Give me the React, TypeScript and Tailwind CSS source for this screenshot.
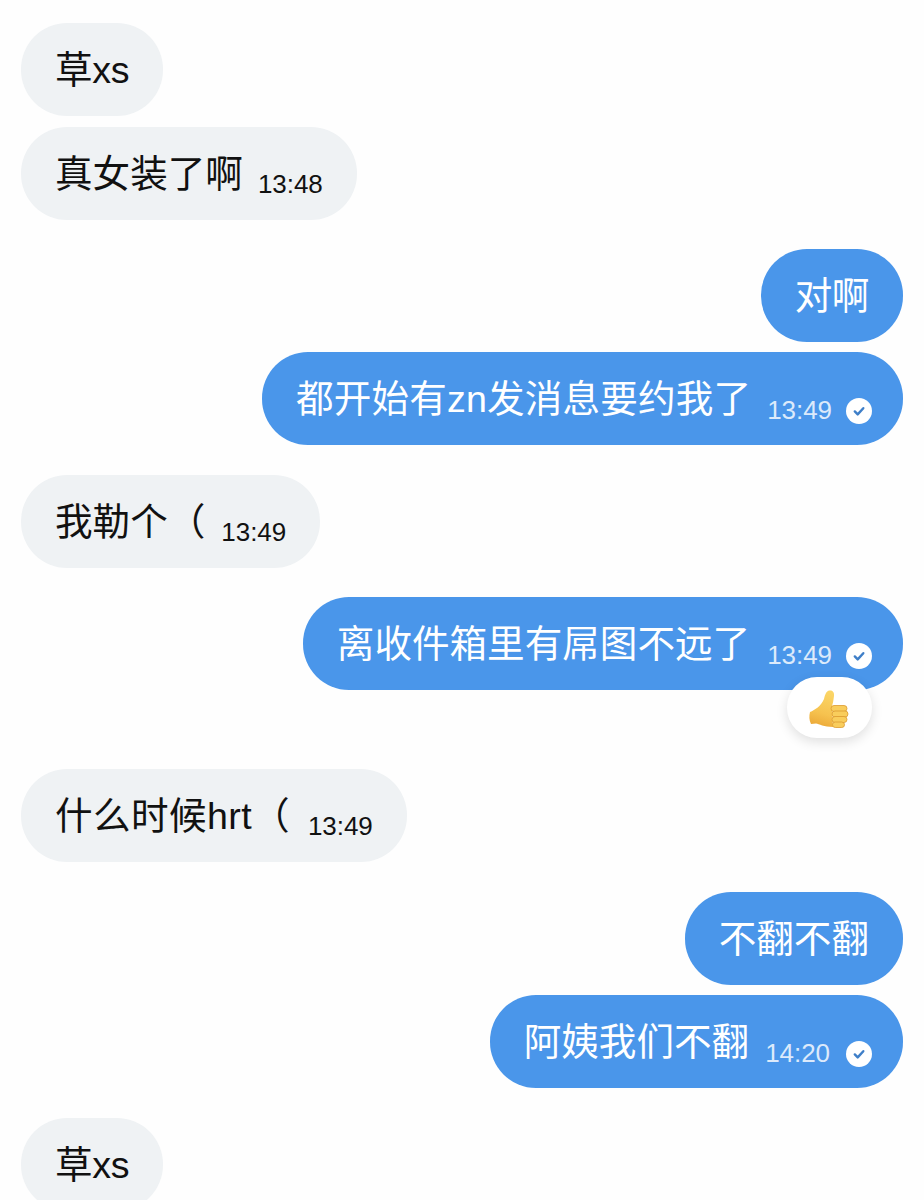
import React from 'react';

type Message = {
  id: number;
  text: string;
  mine?: boolean;
  time?: string;
  read?: boolean;
  reaction?: boolean;
  gapClass: string;
  textClass?: string;
  timeClass?: string;
};

const messages: Message[] = [
  { id: 1, text: '草xs', gapClass: 'mt-[23px]', textClass: 'tracking-[-0.3px]' },
  { id: 2, text: '真女装了啊', time: '13:48', gapClass: 'mt-[11px]', timeClass: 'ml-[15px]' },
  { id: 3, text: '对啊', mine: true, gapClass: 'mt-[29px]', textClass: 'tracking-[-0.4px]' },
  { id: 4, text: '都开始有zn发消息要约我了', mine: true, time: '13:49', read: true, gapClass: 'mt-[10px]', textClass: 'tracking-[0.16px]', timeClass: 'ml-[16px]' },
  { id: 5, text: '我勒个（', time: '13:49', gapClass: 'mt-[30px]', timeClass: 'ml-[16px]' },
  { id: 6, text: '离收件箱里有屌图不远了', mine: true, time: '13:49', read: true, reaction: true, gapClass: 'mt-[29px]', timeClass: 'ml-[17px]' },
  { id: 7, text: '什么时候hrt（', time: '13:49', gapClass: 'mt-[79px]', textClass: 'tracking-[0.4px]', timeClass: 'ml-[18px]' },
  { id: 8, text: '不翻不翻', mine: true, gapClass: 'mt-[30px]' },
  { id: 9, text: '阿姨我们不翻', mine: true, time: '14:20', read: true, gapClass: 'mt-[10px]', timeClass: 'ml-[16px] mr-[2px]' },
  { id: 10, text: '草xs', gapClass: 'mt-[30px]', textClass: 'tracking-[-0.3px]' },
];

const ReadTick = () => (
  <svg width="26" height="26" viewBox="0 0 26 26" className="ml-[14px] mt-[24px] shrink-0">
    <circle cx="13" cy="13" r="13" fill="#ffffff" />
    <path d="M8.800 13.400l2.900 3 5.600-6.200" fill="none" stroke="#3f7fc8" strokeWidth="2.400" strokeLinecap="round" strokeLinejoin="round" />
  </svg>
);

const ThumbsUp = () => (
  <svg width="40" height="38" viewBox="0 0 40 38" className="-ml-[2px] mt-[3px]">
    <defs>
      <linearGradient id="hand" x1="0.500" y1="0" x2="0.300" y2="1">
        <stop offset="0" stopColor="#fbd566" />
        <stop offset="0.600" stopColor="#f6c24f" />
        <stop offset="1" stopColor="#eba736" />
      </linearGradient>
    </defs>
    <path
      d="M1 22C6 20 12 16 15 9C16 5 17 1 20.500 .5C24 0 25.500 3 25 6C24.500 10 24 13 23 16L24 37C15 37 10 34 7 33.500L2 34C0 30 0 26 1 22z"
      fill="url(#hand)"
    />
    <g fill="#f9cd5c" stroke="#dc9a30" strokeWidth="0.800">
      <rect x="22" y="15.500" width="16" height="6" rx="3" />
      <rect x="23" y="21" width="16" height="6" rx="3" />
      <rect x="23" y="26.500" width="15" height="6" rx="3" />
      <rect x="23.500" y="32" width="12" height="5.500" rx="2.750" />
    </g>
  </svg>
);

const Bubble = ({ message }: { message: Message }) => {
  const { text, mine, time, read, reaction, gapClass, textClass, timeClass } = message;
  return (
    <div className={`flex ${mine ? 'justify-end' : 'justify-start'} ${gapClass}`}>
      <div
        className={`relative flex h-[93px] shrink-0 items-center rounded-[46px] pl-[34px] ${
          mine ? 'bg-[#4a96ea] text-white' : 'bg-[#eff2f4] text-[#111111]'
        } ${read ? 'pr-[31px]' : 'pr-[34px]'}`}
      >
        <span className={`mt-[3px] whitespace-nowrap text-[37.6px] leading-none ${textClass ?? ''}`}>{text}</span>
        {time && (
          <span
            className={`text-[26px] leading-none tracking-[-0.05px] ${mine ? 'mt-[22px] text-[#dceafb]' : 'mt-[20px]'} ${timeClass ?? ''}`}
          >
            {time}
          </span>
        )}
        {read && <ReadTick />}
        {reaction && (
          <div className="absolute right-[31px] top-[80px] flex h-[61px] w-[85px] items-center justify-center rounded-[30px] bg-white shadow-[0_4px_12px_rgba(0,0,0,0.12)]">
            <ThumbsUp />
          </div>
        )}
      </div>
    </div>
  );
};

export default function App() {
  return (
    <div className="h-[1200px] w-[924px] overflow-hidden bg-[#fefefe] px-[21px] font-['Liberation_Sans','Noto_Sans_CJK_SC',sans-serif]">
      {messages.map(message => (
        <Bubble key={message.id} message={message} />
      ))}
    </div>
  );
}
